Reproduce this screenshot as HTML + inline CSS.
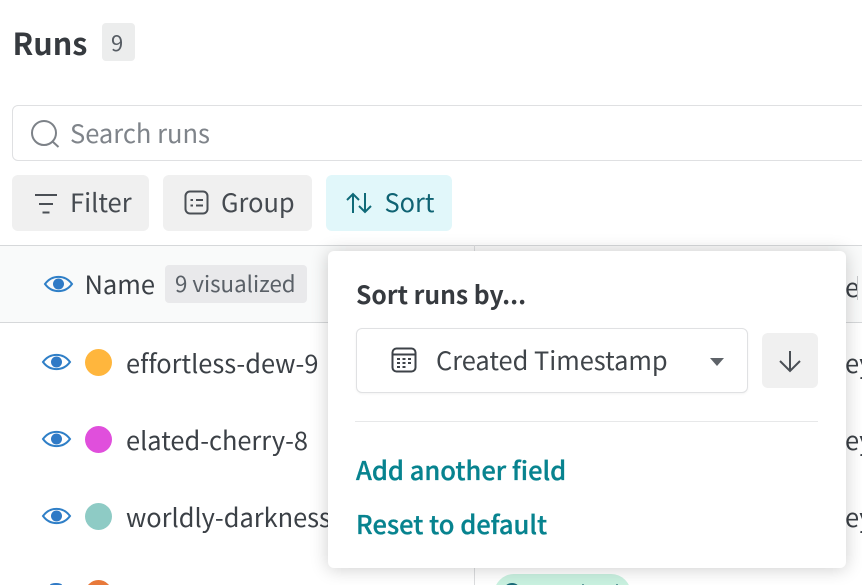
<!DOCTYPE html>
<html lang="en">
<head>
<meta charset="utf-8">
<title>Runs</title>
<style>
html,body{margin:0;padding:0;background:#fff;overflow:hidden;width:862px;height:585px;}
#p{width:862px;height:585px;position:relative;overflow:hidden;font-family:"Noto Sans CJK JP","Liberation Sans",sans-serif;color:#363a3f;font-variant-ligatures:none;}
.a{position:absolute;}
.t{position:absolute;white-space:nowrap;line-height:40px;height:40px;}
svg{position:absolute;overflow:visible;fill:none;}
</style>
</head>
<body>
<div id="p">
<div class="t" style="left:12.500px;top:22px;font-size:30.500px;font-weight:700;color:#363a3f;">Runs</div>
<div class="a" style="left:102px;top:23px;width:33px;height:38px;background:#eceded;border-radius:4px;"></div>
<div class="t" style="left:111px;top:22px;font-size:22px;color:#565c63;">9</div>

<div class="a" style="left:12px;top:105px;width:900px;height:54px;border:1px solid #dfe0e2;border-radius:6px;"></div>
<svg style="left:30px;top:119px" width="30" height="30" viewBox="0 0 30 30"><circle cx="14" cy="14" r="12" stroke="#7d8288" stroke-width="2"/><path d="M22.500 22.500L28.500 28" stroke="#7d8288" stroke-width="2"/></svg>
<div class="t" style="left:70px;top:113px;font-size:25.500px;color:#7f848a;">Search runs</div>

<div class="a" style="left:12px;top:175px;width:137px;height:56px;background:#f0f0f0;border-radius:6px;"></div>
<svg style="left:34px;top:192px" width="24" height="22"><path d="M1 3H23M5 12H19M8.500 20.500H15.500" stroke="#4a4f55" stroke-width="2"/></svg>
<div class="t" style="left:70px;top:182px;font-size:25.500px;color:#454a50;">Filter</div>

<div class="a" style="left:163px;top:175px;width:149px;height:56px;background:#f0f0f0;border-radius:6px;"></div>
<svg style="left:184px;top:190px" width="26" height="26"><rect x="1.500" y="1.500" width="22" height="22" rx="4.500" stroke="#4a4f55" stroke-width="2"/><path d="M6.500 10H9M12 10H19M6.500 15.500H9M12 15.500H19" stroke="#4a4f55" stroke-width="2"/></svg>
<div class="t" style="left:221px;top:182px;font-size:25.400px;color:#454a50;">Group</div>

<div class="a" style="left:326px;top:175px;width:126px;height:56px;background:#e1f7fa;border-radius:6px;"></div>
<svg style="left:346px;top:192px" width="26" height="22"><path d="M7 21V2M1 8L7 2L13 8M19 1V20M13 14L19 20L25 14" stroke="#0f6a78" stroke-width="2"/></svg>
<div class="t" style="left:384.500px;top:182px;font-size:25.400px;color:#0f6373;">Sort</div>

<div class="a" style="left:0;top:245px;width:862px;height:77px;background:#f9fafa;"></div>
<div class="a" style="left:0;top:245px;width:862px;height:1px;background:#d6d8da;"></div>
<div class="a" style="left:0;top:322px;width:862px;height:1px;background:#d6d8da;"></div>
<div class="a" style="left:474px;top:245px;width:1px;height:340px;background:#dcdddf;"></div>

<svg style="left:44px;top:273px" width="30" height="22"><path d="M1 11C8 1.500 21 1.500 28 11C21 20.500 8 20.500 1 11Z" stroke="#2f7fc7" stroke-width="2"/><circle cx="14.500" cy="11" r="5.500" fill="#2f7ac6"/></svg>
<div class="t" style="left:84.500px;top:264px;font-size:25.500px;color:#3b4046;">Name</div>
<div class="a" style="left:165px;top:265px;width:142px;height:38px;background:#e9e9eb;border-radius:4px;"></div>
<div class="t" style="left:175px;top:263px;font-size:22.300px;color:#5a6067;">9 visualized</div>

<svg style="left:42px;top:351px" width="30" height="22"><path d="M1 11C8 1.500 21 1.500 28 11C21 20.500 8 20.500 1 11Z" stroke="#2f7fc7" stroke-width="2"/><circle cx="14.500" cy="11" r="5.500" fill="#2f7ac6"/></svg>
<div class="a" style="left:85px;top:349px;width:27px;height:27px;border-radius:50%;background:#ffb63d;"></div>
<div class="t" style="left:126px;top:343px;font-size:25.400px;color:#3b4046;">effortless-dew-9</div>

<svg style="left:42px;top:428px" width="30" height="22"><path d="M1 11C8 1.500 21 1.500 28 11C21 20.500 8 20.500 1 11Z" stroke="#2f7fc7" stroke-width="2"/><circle cx="14.500" cy="11" r="5.500" fill="#2f7ac6"/></svg>
<div class="a" style="left:85px;top:426px;width:27px;height:27px;border-radius:50%;background:#e04fdc;"></div>
<div class="t" style="left:126px;top:420px;font-size:25.400px;color:#3b4046;">elated-cherry-8</div>

<svg style="left:42px;top:505px" width="30" height="22"><path d="M1 11C8 1.500 21 1.500 28 11C21 20.500 8 20.500 1 11Z" stroke="#2f7fc7" stroke-width="2"/><circle cx="14.500" cy="11" r="5.500" fill="#2f7ac6"/></svg>
<div class="a" style="left:85px;top:503px;width:27px;height:27px;border-radius:50%;background:#8ecbc5;"></div>
<div class="t" style="left:126px;top:497px;font-size:25.400px;color:#3b4046;">worldly-darkness</div>

<div class="a" style="left:50px;top:583px;width:12px;height:4px;border-radius:50% 50% 0 0;background:#2f7ac6;"></div>
<div class="a" style="left:85px;top:580px;width:27px;height:27px;border-radius:50%;background:#e8793a;"></div>
<div class="a" style="left:494px;top:574px;width:137px;height:40px;border-radius:20px;background:#c9f1e0;"></div>
<svg style="left:504px;top:583px" width="16" height="6"><circle cx="8" cy="9" r="8" stroke="#1a6a78" stroke-width="2"/></svg>
<div class="a" style="left:582px;top:584px;width:2px;height:1px;background:#5f9c9c;"></div>
<div class="a" style="left:616px;top:584px;width:2px;height:1px;background:#5f9c9c;"></div>

<div class="t" style="left:845px;top:267px;font-size:25.500px;color:#3b4046;">e</div>
<div class="a" style="left:857px;top:276px;width:1px;height:24px;background:#c8cacc;"></div>
<div class="t" style="left:845px;top:343px;font-size:25.500px;color:#3b4046;">ey</div>
<div class="t" style="left:845px;top:420px;font-size:25.500px;color:#3b4046;">ey</div>
<div class="t" style="left:845px;top:497px;font-size:25.500px;color:#3b4046;">ey</div>

<div class="a" style="left:328px;top:251px;width:518px;height:317px;background:#fff;border-radius:6px;box-shadow:0 1px 18px rgba(0,0,0,.2);"></div>
<div class="t" style="left:356px;top:274px;font-size:24.700px;font-weight:700;color:#363a3f;">Sort runs by...</div>
<div class="a" style="left:356px;top:328px;width:390px;height:63px;border:1px solid #e0e1e3;border-radius:6px;background:#fff;box-shadow:0 1px 2px rgba(0,0,0,.05);"></div>
<svg style="left:391px;top:347px" width="26" height="27"><rect x="1.500" y="1.500" width="23" height="23" rx="4" stroke="#3d4248" stroke-width="2"/><path d="M2 7.500H24" stroke="#3d4248" stroke-width="2"/><path d="M6 12H9M11.500 12H14.500M17 12H20M6 16H9M11.500 16H14.500M17 16H20M6 20H9M11.500 20H14.500" stroke="#3d4248" stroke-width="2"/></svg>
<div class="t" style="left:436px;top:340px;font-size:25.400px;color:#3f4449;">Created Timestamp</div>
<svg style="left:710px;top:358px" width="14" height="8"><path d="M0 0H14L7 8Z" fill="#5e6369"/></svg>
<div class="a" style="left:762px;top:333px;width:56px;height:55px;background:#f0f0f0;border-radius:6px;"></div>
<svg style="left:778px;top:350px" width="24" height="22"><path d="M12 1V21M2 11L12 21L22 11" stroke="#4a4f55" stroke-width="2"/></svg>
<div class="a" style="left:355px;top:421px;width:463px;height:1px;background:#e7e8e9;"></div>
<div class="t" style="left:356px;top:450px;font-size:25.500px;font-weight:500;color:#07838f;-webkit-text-stroke:.3px #07838f;">Add another field</div>
<div class="t" style="left:356px;top:504px;font-size:25.500px;font-weight:500;color:#07838f;-webkit-text-stroke:.3px #07838f;">Reset to default</div>
</div>
</body>
</html>
